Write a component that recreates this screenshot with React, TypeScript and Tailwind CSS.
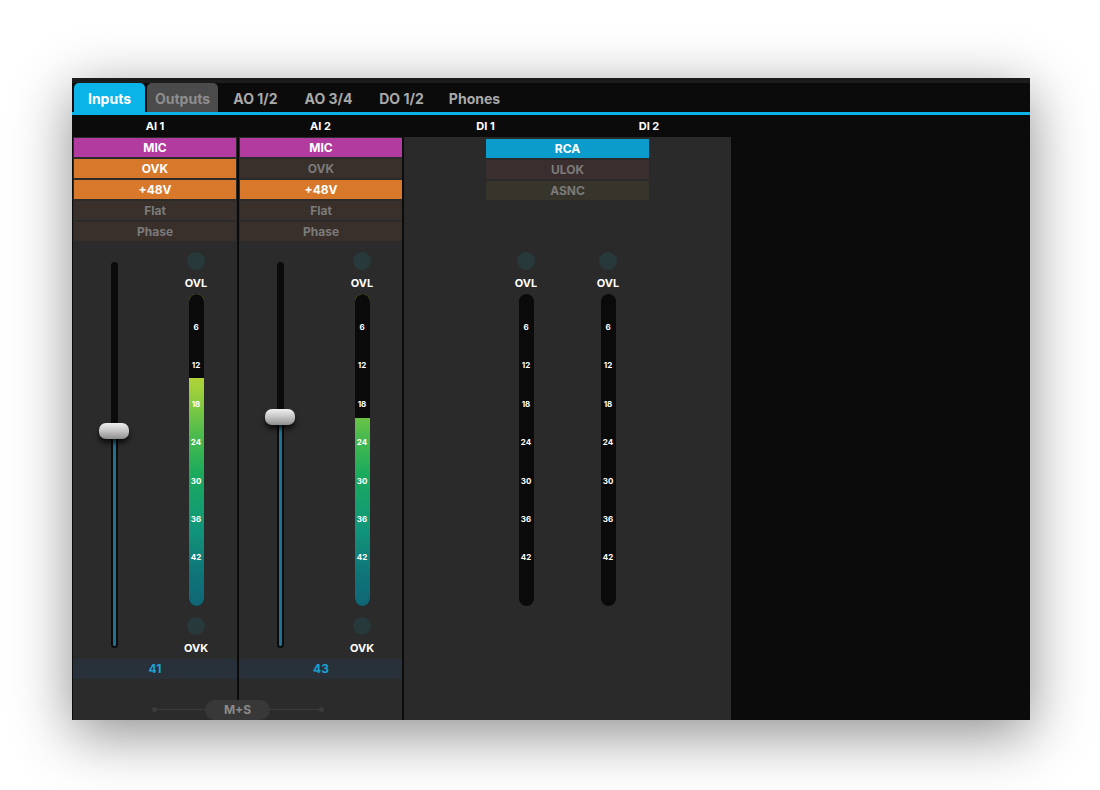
import React from "react";

const FONT = { fontFamily: "Inter, 'Noto Sans', 'DejaVu Sans', sans-serif" };

const TABS = ["Inputs", "Outputs", "AO 1/2", "AO 3/4", "DO 1/2", "Phones"];
const SCALE = ["6", "12", "18", "24", "30", "36", "42"];

type Btn = { label: string; tone: "mic" | "on" | "off" | "rca" | "ulok" | "asnc" };

const TONE: Record<Btn["tone"], string> = {
  mic: "bg-[#b23b9f] text-white",
  on: "bg-[#d8782b] text-white",
  off: "bg-[#3a302b] text-[#7b7b7b]",
  rca: "bg-[#0c9ccb] text-white",
  ulok: "bg-[#3b2e2e] text-[#7b7b7b]",
  asnc: "bg-[#37342b] text-[#7b7b7b]",
};

function ButtonStack({ buttons }: { buttons: Btn[] }) {
  return (
    <div className="flex flex-col gap-[2px]">
      {buttons.map((b) => (
        <div
          key={b.label}
          className={`h-[19px] flex items-center justify-center text-[12px] font-bold ${TONE[b.tone]}`}
        >
          {b.label}
        </div>
      ))}
    </div>
  );
}

function Led() {
  return <div className="w-[18px] h-[18px] rounded-full bg-[#27393a]" />;
}

function Meter({ top, ovk = true }: { top?: number; ovk?: boolean }) {
  return (
    <div className="flex flex-col items-center w-[82px]">
      <div className="mt-[11px]">
        <Led />
      </div>
      <div className="mt-[6px] h-[14px] leading-[14px] text-[11px] font-bold text-white">OVL</div>
      <div className="mt-[4px] relative w-[15px] h-[312px] rounded-full overflow-hidden bg-[#0a0a0a]">
        {top !== undefined && (
          <>
            <div className="absolute inset-0 bg-[linear-gradient(to_bottom,#cfda2e_18%,#a3d13a_30%,#4dbb4d_45%,#1aaa5d_58%,#11967a_75%,#0f7478_90%,#0f6676_100%)]" />
            <div className="absolute left-0 right-0 top-0 bg-[#0a0a0a]" style={{ height: top }} />
          </>
        )}
        {SCALE.map((s, i) => (
          <div
            key={s}
            className="absolute left-0 right-0 text-center text-[8px] leading-[10px] font-bold text-white"
            style={{ top: 28 + i * 38.4 }}
          >
            {s}
          </div>
        ))}
      </div>
      {ovk && (
        <>
          <div className="mt-[11px]">
            <Led />
          </div>
          <div className="mt-[6px] h-[14px] leading-[14px] text-[11px] font-bold text-white">OVK</div>
        </>
      )}
    </div>
  );
}

function Fader({ pos }: { pos: number }) {
  return (
    <div className="w-[82px] flex justify-center pt-[21px]">
      <div className="relative w-[7px] h-[386px] rounded-full bg-[#0b0b0b]">
        <div
          className="absolute left-[2px] right-[2px] bottom-[2px] rounded-full bg-[#1e7394]"
          style={{ top: pos + 8 }}
        />
        <div
          className="absolute left-1/2 -translate-x-1/2 w-[30px] h-[16px] rounded-[7px] bg-[linear-gradient(to_bottom,#f0f0f0,#c4c4c4_50%,#8e8e8e)] shadow-[0_4px_5px_rgba(0,0,0,0.7)]"
          style={{ top: pos }}
        />
      </div>
    </div>
  );
}

function AnalogChannel({
  phantomOvk,
  fader,
  level,
  value,
}: {
  phantomOvk: boolean;
  fader: number;
  level: number;
  value: string;
}) {
  return (
    <div className="flex-1 flex flex-col bg-[#2b2b2b]">
      <div className="px-[1px] pt-[1px]">
        <ButtonStack
          buttons={[
            { label: "MIC", tone: "mic" },
            { label: "OVK", tone: phantomOvk ? "on" : "off" },
            { label: "+48V", tone: "on" },
            { label: "Flat", tone: "off" },
            { label: "Phase", tone: "off" },
          ]}
        />
      </div>
      <div className="flex h-[418px]">
        <Fader pos={fader} />
        <Meter top={level} />
      </div>
      <div className="h-[20px] bg-[#28313a] flex items-center justify-center text-[12px] font-bold text-[#1ba1d6]">
        {value}
      </div>
    </div>
  );
}

export default function App() {
  return (
    <div className="min-h-[790px] bg-white pt-[78px] pl-[72px]" style={FONT}>
      <div className="w-[958px] h-[642px] flex flex-col overflow-hidden bg-[#0b0b0b] shadow-[0_14px_55px_rgba(0,0,0,0.45)]">
        <div className="h-[5px] bg-[#1c1c1c]" />
        <div className="h-[29px] flex items-end gap-[2px] pl-[2px]">
          {TABS.map((t, i) => (
            <div
              key={t}
              className={`w-[71px] h-[29px] flex items-center justify-center pt-[2px] rounded-t-[5px] text-[14px] font-bold ${
                i === 0
                  ? "bg-[#0ab4e8] text-white"
                  : i === 1
                  ? "bg-[#4b4b4b] text-[#8e8e8e]"
                  : "text-[#a9a9a9]"
              }`}
            >
              {t}
            </div>
          ))}
        </div>
        <div className="h-[3px] bg-[#0ab4e8]" />
        <div className="h-[22px] flex pl-[1px] text-[11px] font-bold text-white">
          <div className="w-[164px] flex items-center justify-center">AI 1</div>
          <div className="w-[2px]" />
          <div className="w-[163px] flex items-center justify-center">AI 2</div>
          <div className="w-[2px]" />
          <div className="w-[163px] flex items-center justify-center">DI 1</div>
          <div className="w-[164px] flex items-center justify-center">DI 2</div>
        </div>
        <div className="flex-1 flex pl-[1px]">
          <div className="w-[329px] flex flex-col bg-[#2b2b2b]">
            <div className="flex-1 flex">
              <div className="w-[164px] flex">
                <AnalogChannel phantomOvk fader={161} level={84} value="41" />
              </div>
              <div className="w-[2px] bg-[#0b0b0b]" />
              <div className="w-[163px] flex">
                <AnalogChannel phantomOvk={false} fader={147} level={124} value="43" />
              </div>
            </div>
            <div className="relative h-[20px] flex items-center justify-center">
              <div className="absolute left-[80px] right-[79px] top-[9px] h-px bg-[#3b3b3b]" />
              <div className="absolute left-[79px] top-[7px] w-[5px] h-[5px] rounded-full bg-[#3b3b3b]" />
              <div className="absolute right-[78px] top-[7px] w-[5px] h-[5px] rounded-full bg-[#3b3b3b]" />
              <div className="relative w-[65px] h-[20px] rounded-full bg-[#383838] flex items-center justify-center text-[12px] font-bold text-[#8a8a8a]">
                M+S
              </div>
            </div>
          </div>
          <div className="w-[2px] bg-[#0b0b0b]" />
          <div className="w-[327px] flex flex-col bg-[#2a2a2a]">
            <div className="h-[104px] pt-[2px] flex justify-center">
              <div className="w-[163px]">
                <ButtonStack
                  buttons={[
                    { label: "RCA", tone: "rca" },
                    { label: "ULOK", tone: "ulok" },
                    { label: "ASNC", tone: "asnc" },
                  ]}
                />
              </div>
            </div>
            <div className="flex">
              <div className="w-[81px]" />
              <Meter ovk={false} />
              <Meter ovk={false} />
            </div>
          </div>
          <div className="flex-1" />
        </div>
      </div>
    </div>
  );
}
